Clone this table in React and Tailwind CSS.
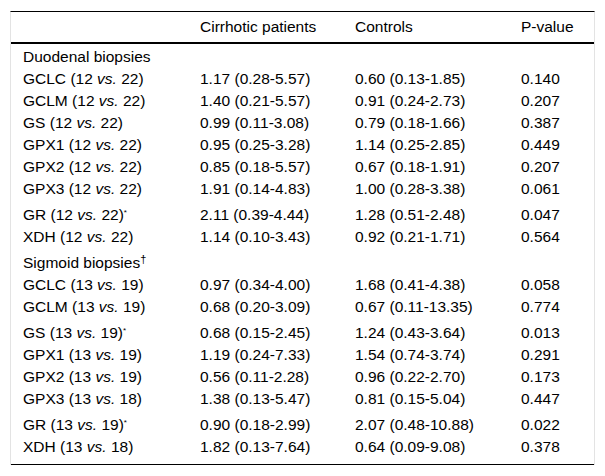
const duodenal = [
  { gene: "GCLC", n: "12", m: "22", a: "1.17 (0.28-5.57)", b: "0.60 (0.13-1.85)", p: "0.140" },
  { gene: "GCLM", n: "12", m: "22", a: "1.40 (0.21-5.57)", b: "0.91 (0.24-2.73)", p: "0.207" },
  { gene: "GS", n: "12", m: "22", a: "0.99 (0.11-3.08)", b: "0.79 (0.18-1.66)", p: "0.387" },
  { gene: "GPX1", n: "12", m: "22", a: "0.95 (0.25-3.28)", b: "1.14 (0.25-2.85)", p: "0.449" },
  { gene: "GPX2", n: "12", m: "22", a: "0.85 (0.18-5.57)", b: "0.67 (0.18-1.91)", p: "0.207" },
  { gene: "GPX3", n: "12", m: "22", a: "1.91 (0.14-4.83)", b: "1.00 (0.28-3.38)", p: "0.061" },
  { gene: "GR", n: "12", m: "22", a: "2.11 (0.39-4.44)", b: "1.28 (0.51-2.48)", p: "0.047", star: true },
  { gene: "XDH", n: "12", m: "22", a: "1.14 (0.10-3.43)", b: "0.92 (0.21-1.71)", p: "0.564" },
];

const sigmoid = [
  { gene: "GCLC", n: "13", m: "19", a: "0.97 (0.34-4.00)", b: "1.68 (0.41-4.38)", p: "0.058" },
  { gene: "GCLM", n: "13", m: "19", a: "0.68 (0.20-3.09)", b: "0.67 (0.11-13.35)", p: "0.774" },
  { gene: "GS", n: "13", m: "19", a: "0.68 (0.15-2.45)", b: "1.24 (0.43-3.64)", p: "0.013", star: true },
  { gene: "GPX1", n: "13", m: "19", a: "1.19 (0.24-7.33)", b: "1.54 (0.74-3.74)", p: "0.291" },
  { gene: "GPX2", n: "13", m: "19", a: "0.56 (0.11-2.28)", b: "0.96 (0.22-2.70)", p: "0.173" },
  { gene: "GPX3", n: "13", m: "18", a: "1.38 (0.13-5.47)", b: "0.81 (0.15-5.04)", p: "0.447" },
  { gene: "GR", n: "13", m: "19", a: "0.90 (0.18-2.99)", b: "2.07 (0.48-10.88)", p: "0.022", star: true },
  { gene: "XDH", n: "13", m: "18", a: "1.82 (0.13-7.64)", b: "0.64 (0.09-9.08)", p: "0.378", last: true },
];

function DataRow({ r }) {
  const pad = r.star ? "pt-[6px]" : "pt-[2px]";
  const bottom = r.last ? "pb-[8px]" : "pb-[2px]";
  const cell = `px-3 ${pad} ${bottom}`;
  return (
    <tr>
      <td className={cell}>
        {r.gene} ({r.n} <i>vs.</i> {r.m})
        {r.star && <sup className="text-[8px] -top-[0.6em]">*</sup>}
      </td>
      <td className={cell}>{r.a}</td>
      <td className={cell}>{r.b}</td>
      <td className={cell}>{r.p}</td>
    </tr>
  );
}

export default function App() {
  return (
    <div
      className="bg-white w-[605px] h-[476px] pt-[11px] px-[10px] text-black text-[15.5px] leading-[18px]"
      style={{ fontFamily: '"Liberation Sans", Arial, sans-serif' }}
    >
      <div className="border-t border-t-black border-x border-x-[#e3e3e3]">
        <table className="w-full table-fixed border-collapse">
          <colgroup>
            <col className="w-[177px]" />
            <col className="w-[155px]" />
            <col className="w-[166px]" />
            <col />
          </colgroup>
          <thead>
            <tr className="border-b-2 border-black text-left">
              <th className="font-normal px-3 py-[6px]"></th>
              <th className="font-normal px-3 py-[6px]">Cirrhotic patients</th>
              <th className="font-normal px-3 py-[6px]">Controls</th>
              <th className="font-normal px-3 py-[6px]">P-value</th>
            </tr>
          </thead>
          <tbody className="border-b border-black">
            <tr>
              <td className="px-3 pt-[4px] pb-[2px]" colSpan={4}>Duodenal biopsies</td>
            </tr>
            {duodenal.map((r) => (
              <DataRow key={"d" + r.gene} r={r} />
            ))}
            <tr>
              <td className="px-3 pt-[6px] pb-[2px]" colSpan={4}>
                Sigmoid biopsies<sup className="text-[11px] -top-[0.45em]">†</sup>
              </td>
            </tr>
            {sigmoid.map((r) => (
              <DataRow key={"s" + r.gene} r={r} />
            ))}
          </tbody>
        </table>
      </div>
    </div>
  );
}
